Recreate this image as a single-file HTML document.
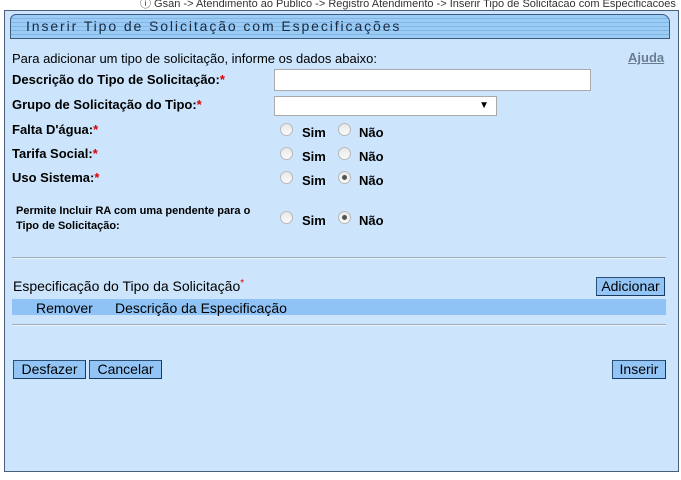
<!DOCTYPE html>
<html><head><meta charset="utf-8"><style>
*{margin:0;padding:0;box-sizing:border-box}
body{width:681px;height:480px;background:#fff;position:relative;overflow:hidden;font-family:"Liberation Sans",Arial,sans-serif;font-size:13px;color:#000}
.a{position:absolute;white-space:nowrap}
.s{color:#d00}
.b{font-weight:bold}
.panel{position:absolute;left:4px;top:10px;width:675px;height:462px;background:#cce5fc;border:1px solid #4a5f77}
.hdr{position:absolute;left:10px;top:14px;width:660px;height:25px;border:1px solid #3a5a80;border-radius:6px 8px 0 0;background:repeating-linear-gradient(#9ccbf4 0,#9ccbf4 3px,#80b7ea 3px,#80b7ea 4px);}
.btn{position:absolute;height:19px;background:#92c5f5;border:1px solid #2c4f76;border-right-color:#163a60;border-bottom-color:#163a60;font-size:14px;line-height:17px;text-align:center;color:#000}
.r{position:absolute;width:13px;height:13px;border-radius:50%;border:1px solid #b8b8b8;background:linear-gradient(#e8e8e8,#fafafa)}
.r.on::after{content:"";position:absolute;left:3px;top:3px;width:5px;height:5px;border-radius:50%;background:#555}
.hr{position:absolute;left:12px;width:654px;height:2px;background:#a0adbb;border-bottom:1px solid #e8f2fc}
</style></head><body>
<div class="a" style="left:140px;top:-5px;font-size:11px;color:#333">&#9432; Gsan -&gt; Atendimento ao Publico -&gt; Registro Atendimento -&gt; Inserir Tipo de Solicitacao com Especificacoes</div>
<div class="panel"></div>
<div class="hdr"></div>
<div class="a" style="left:26px;top:18px;font-size:14px;letter-spacing:1.9px;color:#1a2a40">Inserir Tipo de Solicitação com Especificações</div>
<div class="a" style="left:12px;top:51px;font-size:13px">Para adicionar um tipo de solicitação, informe os dados abaixo:</div>
<div class="a b" style="left:628px;top:50px;color:#6a7d90;text-decoration:underline">Ajuda</div>

<div class="a b" style="left:12px;top:72px">Descrição do Tipo de Solicitação:<span class="s">*</span></div>
<div class="a" style="left:274px;top:69px;width:317px;height:22px;background:#fff;border:1px solid #aaa"></div>
<div class="a b" style="left:12px;top:97px">Grupo de Solicitação do Tipo:<span class="s">*</span></div>
<div class="a" style="left:274px;top:96px;width:223px;height:20px;background:#fff;border:1px solid #aaa"><span style="position:absolute;right:7px;top:3px;font-size:10px">&#9660;</span></div>

<div class="a b" style="left:12px;top:122px">Falta D'água:<span class="s">*</span></div>
<div class="a b" style="left:12px;top:146px">Tarifa Social:<span class="s">*</span></div>
<div class="a b" style="left:12px;top:170px">Uso Sistema:<span class="s">*</span></div>
<div class="a b" style="left:16px;top:204px;font-size:11px;line-height:15px">Permite Incluir RA com uma pendente para o<br>Tipo de Solicitação:</div>

<div class="r" style="left:280px;top:123px"></div><div class="a b" style="left:302px;top:125px">Sim</div>
<div class="r" style="left:338px;top:123px"></div><div class="a b" style="left:359px;top:125px">Não</div>
<div class="r" style="left:280px;top:147px"></div><div class="a b" style="left:302px;top:149px">Sim</div>
<div class="r" style="left:338px;top:147px"></div><div class="a b" style="left:359px;top:149px">Não</div>
<div class="r" style="left:280px;top:171px"></div><div class="a b" style="left:302px;top:173px">Sim</div>
<div class="r on" style="left:338px;top:171px"></div><div class="a b" style="left:359px;top:173px">Não</div>
<div class="r" style="left:280px;top:211px"></div><div class="a b" style="left:302px;top:213px">Sim</div>
<div class="r on" style="left:338px;top:211px"></div><div class="a b" style="left:359px;top:213px">Não</div>

<div class="hr" style="top:257px"></div>
<div class="a" style="left:13px;top:278px;font-size:14px">Especificação do Tipo da Solicitação<span class="s" style="font-size:10px;vertical-align:top">*</span></div>
<div class="btn" style="left:596px;top:277px;width:69px">Adicionar</div>
<div class="a" style="left:12px;top:299px;width:654px;height:16px;background:#8fc3f5"></div>
<div class="a" style="left:36px;top:300px;font-size:14px">Remover</div>
<div class="a" style="left:115px;top:300px;font-size:14px">Descrição da Especificação</div>
<div class="hr" style="top:324px"></div>

<div class="btn" style="left:13px;top:360px;width:73px">Desfazer</div>
<div class="btn" style="left:89px;top:360px;width:73px">Cancelar</div>
<div class="btn" style="left:612px;top:360px;width:54px">Inserir</div>
</body></html>
